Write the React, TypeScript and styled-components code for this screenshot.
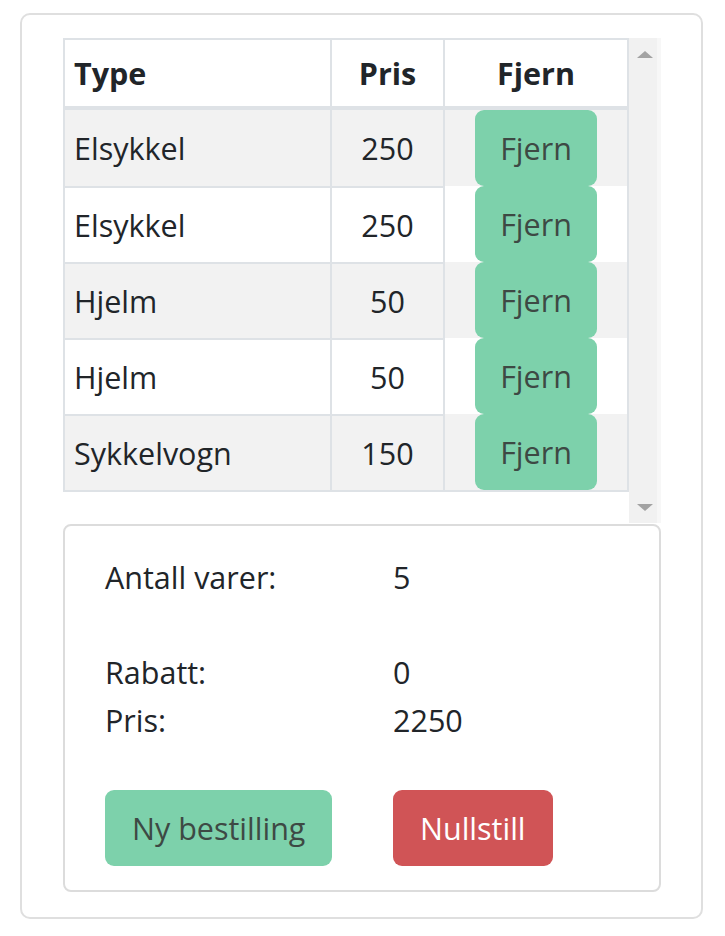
import React from "react";
import styled, { createGlobalStyle } from "styled-components";

const Global = createGlobalStyle`
  html, body { margin: 0; padding: 0; background: #fff; }
  body {
    font-family: "Open Sans", "Noto Sans", sans-serif;
    font-size: 30.5px;
    line-height: 48px;
    color: #212529;
  }
  * { box-sizing: border-box; }
`;

const Page = styled.div`
  padding: 13px 22px 20px 20px;
`;

const Card = styled.div`
  width: 683px;
  border: 2px solid #dfdfdf;
  border-radius: 10px;
  padding: 23px 40px 25px 41px;
  display: flex;
  flex-direction: column;
  gap: 1px;
`;

const ScrollArea = styled.div`
  display: flex;
  height: 485px;
  background: #fff;
`;

const TableWrap = styled.div`
  flex: 1;
`;

const Table = styled.table`
  width: 564px;
  border-collapse: separate;
  border-spacing: 0;
  border-right: 2px solid #dee2e6;
  border-bottom: 2px solid #dee2e6;
  table-layout: fixed;
`;

const Th = styled.th<{ $align?: string; $w: number }>`
  width: ${(p) => p.$w}px;
  height: 72px;
  padding: 0 9px;
  font-weight: 700;
  text-align: ${(p) => p.$align || "center"};
  border-top: 2px solid #dee2e6;
  border-left: 2px solid #dee2e6;
  border-bottom: 4px solid #dee2e6;
  vertical-align: middle;
  color: #212529;
`;

const Tr = styled.tr<{ $striped: boolean }>`
  background: ${(p) => (p.$striped ? "#f2f2f2" : "#fff")};
`;

const Td = styled.td<{ $align?: string; $first?: boolean }>`
  height: 76px;
  padding: 0 9px;
  text-align: ${(p) => p.$align || "center"};
  border-left: 2px solid #dee2e6;
  border-top: ${(p) => (p.$first ? "0" : "2px solid #dee2e6")};
  vertical-align: middle;
`;

const ActionTd = styled.td`
  height: 76px;
  padding: 0;
  text-align: center;
  border-left: 2px solid #dee2e6;
  vertical-align: middle;
`;

const Btn = styled.button<{ $variant: "green" | "red" }>`
  font-family: inherit;
  font-size: 30.5px;
  line-height: 48px;
  border: none;
  border-radius: 9px;
  height: 76px;
  padding: 0 27px;
  cursor: pointer;
  background: ${(p) => (p.$variant === "green" ? "#7dd1ab" : "#d05456")};
  color: ${(p) => (p.$variant === "green" ? "#3d4944" : "#ffffff")};
`;

const RemoveBtn = styled(Btn)`
  width: 122px;
  padding: 0;
  display: block;
  margin: 0 auto;
`;

const Scrollbar = styled.div`
  width: 34px;
  background: #f1f1f1;
  display: flex;
  flex-direction: column;
  justify-content: space-between;
  align-items: center;
  padding: 13px 0 12px 0;
  border-right: 4px solid #f7f7f7;
`;

const Arrow = styled.div<{ $down?: boolean }>`
  width: 0;
  height: 0;
  border-left: 8px solid transparent;
  border-right: 8px solid transparent;
  ${(p) =>
    p.$down
      ? "border-top: 7px solid #a3a3a3;"
      : "border-bottom: 7px solid #a3a3a3;"}
  margin-left: 4px;
`;

const Summary = styled.div`
  border: 2px solid #dcdcdc;
  border-radius: 8px;
  padding: 27px 40px 24px 40px;
  display: grid;
  grid-template-columns: 288px auto;
  align-items: center;
`;

const Spacer = styled.div`
  grid-column: 1 / span 2;
  height: 47px;
`;

const ButtonRow = styled.div`
  grid-column: 1 / span 2;
  display: grid;
  grid-template-columns: 288px auto;
  margin-top: 46px;
  justify-items: start;
`;

const Label = styled.div``;
const Value = styled.div``;

const rows = [
  { type: "Elsykkel", pris: 250 },
  { type: "Elsykkel", pris: 250 },
  { type: "Hjelm", pris: 50 },
  { type: "Hjelm", pris: 50 },
  { type: "Sykkelvogn", pris: 150 },
];

export default function App() {
  return (
    <>
      <Global />
      <Page>
        <Card>
          <ScrollArea>
            <TableWrap>
              <Table>
                <thead>
                  <tr>
                    <Th $align="left" $w={267}>Type</Th>
                    <Th $w={113}>Pris</Th>
                    <Th $w={184}>Fjern</Th>
                  </tr>
                </thead>
                <tbody>
                  {rows.map((r, i) => (
                    <Tr key={i} $striped={i % 2 === 0}>
                      <Td $align="left" $first={i === 0}>{r.type}</Td>
                      <Td $first={i === 0}>{r.pris}</Td>
                      <ActionTd>
                        <RemoveBtn $variant="green">Fjern</RemoveBtn>
                      </ActionTd>
                    </Tr>
                  ))}
                </tbody>
              </Table>
            </TableWrap>
            <Scrollbar>
              <Arrow />
              <Arrow $down />
            </Scrollbar>
          </ScrollArea>
          <Summary>
            <Label>Antall varer:</Label>
            <Value>5</Value>
            <Spacer />
            <Label>Rabatt:</Label>
            <Value>0</Value>
            <Label>Pris:</Label>
            <Value>2250</Value>
            <ButtonRow>
              <Btn $variant="green">Ny bestilling</Btn>
              <Btn $variant="red">Nullstill</Btn>
            </ButtonRow>
          </Summary>
        </Card>
      </Page>
    </>
  );
}
